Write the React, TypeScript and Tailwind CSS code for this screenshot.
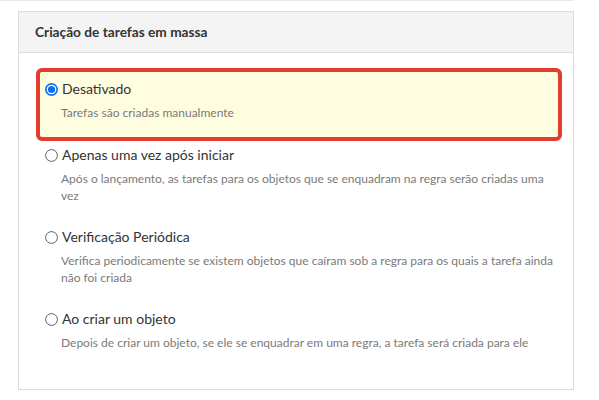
import React from "react";

function Radio({ checked }: { checked?: boolean }) {
  return (
    <svg width="13" height="13" viewBox="0 0 13 13" className="shrink-0">
      {checked ? (
        <>
          <circle cx="6.5" cy="6.5" r="6.5" fill="#0b6ff2" />
          <circle cx="6.5" cy="6.5" r="4.8" fill="#ffffff" />
          <circle cx="6.5" cy="6.5" r="3.6" fill="#0b6ff2" />
        </>
      ) : (
        <circle cx="6.5" cy="6.5" r="5.9" fill="#ffffff" stroke="#5f5f5f" strokeWidth="1" />
      )}
    </svg>
  );
}

function Option({
  title,
  lines,
  checked,
}: {
  title: string;
  lines: string[];
  checked?: boolean;
}) {
  return (
    <div>
      <div className="flex items-center gap-[4px] h-[20px]">
        <Radio checked={checked} />
        <span className="text-[14px] leading-[20px] text-[#333333]">{title}</span>
      </div>
      <div className="mt-[5px] pl-[16px] text-[12px] leading-[17px] text-[#7a7a7a]">
        {lines.map((l, i) => (
          <div key={i} className="whitespace-nowrap">
            {l}
          </div>
        ))}
      </div>
    </div>
  );
}

export default function App() {
  return (
    <div
      className="w-[599px] h-[400px] bg-white overflow-hidden"
      style={{ fontFamily: "Lato, 'Open Sans', sans-serif" }}
    >
      <div className="w-[574px] h-px bg-[#ebebeb]" />
      <div className="ml-[18px] mt-[10px] w-[556px] border border-[#dcdcdc] bg-white">
        <div className="h-[41px] bg-[#f4f4f4] border-b border-[#dcdcdc] flex items-center pl-[16px]">
          <span className="text-[13.7px] font-bold text-[#333333]">Criação de tarefas em massa</span>
        </div>
        <div className="pt-[15px] pb-[19px] pl-[17px]">
          <div className="w-[526px] border-4 border-[#e43d30] rounded-[6px] bg-[#fffde0] pt-[7px] pb-[16px] pl-[5px]">
            <Option checked title="Desativado" lines={["Tarefas são criadas manualmente"]} />
          </div>
          <div className="pl-[9px]">
            <div className="pt-[4px] pb-[19px]">
              <Option
                title="Apenas uma vez após iniciar"
                lines={[
                  "Após o lançamento, as tarefas para os objetos que se enquadram na regra serão criadas uma",
                  "vez",
                ]}
              />
            </div>
            <div className="pt-[4px] pb-[19px]">
              <Option
                title="Verificação Periódica"
                lines={[
                  "Verifica periodicamente se existem objetos que caíram sob a regra para os quais a tarefa ainda",
                  "não foi criada",
                ]}
              />
            </div>
            <div className="pt-[4px] pb-[19px]">
              <Option
                title="Ao criar um objeto"
                lines={[
                  "Depois de criar um objeto, se ele se enquadrar em uma regra, a tarefa será criada para ele",
                ]}
              />
            </div>
          </div>
        </div>
      </div>
    </div>
  );
}
